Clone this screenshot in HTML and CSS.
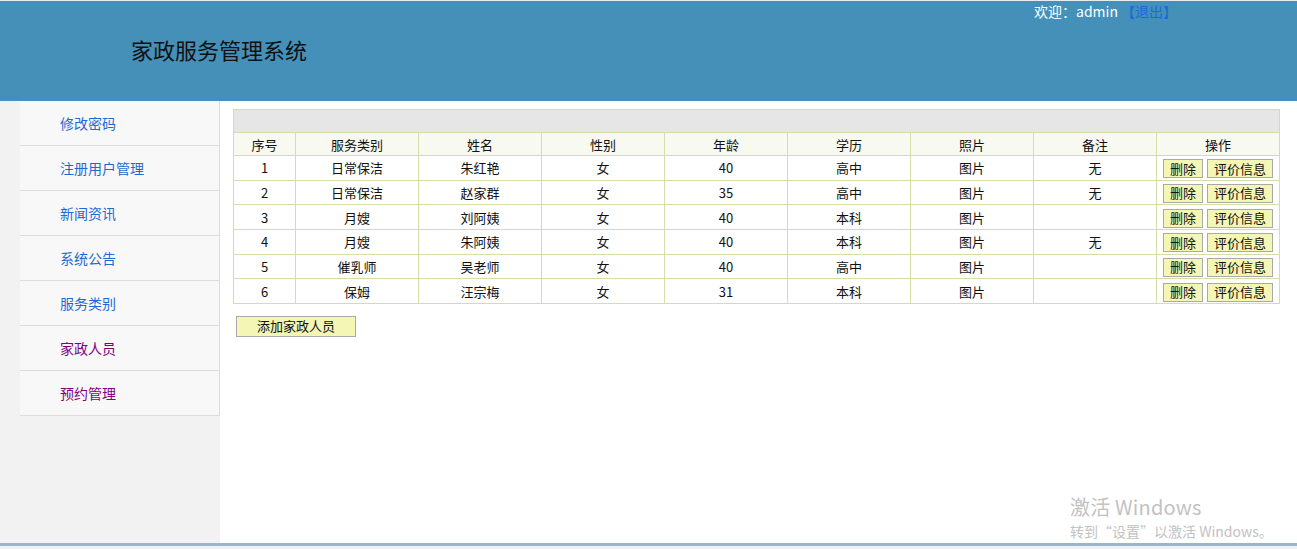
FILE: index.html
```html
<!DOCTYPE html>
<html>
<head>
    <title>家政服务管理系统</title>
    <meta charset="UTF-8">
    <link rel="stylesheet" href="styles.css">
</head>
<body>
    <div class="header">
        <div class="top-info">欢迎：admin <a href="#" class="logout">【退出】</a></div>
        <div class="title">家政服务管理系统</div>
    </div>

    <div class="wrap">
        <div class="sidebar">
            <ul class="menu">
                <li><a href="#">修改密码</a></li>
                <li><a href="#">注册用户管理</a></li>
                <li><a href="#">新闻资讯</a></li>
                <li><a href="#">系统公告</a></li>
                <li><a href="#">服务类别</a></li>
                <li><a href="#" class="visited">家政人员</a></li>
                <li><a href="#" class="visited">预约管理</a></li>
            </ul>
        </div>

        <div class="main">
            <table class="list">
                <colgroup>
                    <col class="c-no">
                    <col><col><col><col><col><col><col><col>
                </colgroup>
                <tr class="caption"><td colspan="9"></td></tr>
                <tr class="head">
                    <td>序号</td>
                    <td>服务类别</td>
                    <td>姓名</td>
                    <td>性别</td>
                    <td>年龄</td>
                    <td>学历</td>
                    <td>照片</td>
                    <td>备注</td>
                    <td>操作</td>
                </tr>
                <tr>
                    <td>1</td><td>日常保洁</td><td>朱红艳</td><td>女</td><td>40</td><td>高中</td><td>图片</td><td>无</td>
                    <td class="ops"><button class="btn">删除</button><button class="btn">评价信息</button></td>
                </tr>
                <tr>
                    <td>2</td><td>日常保洁</td><td>赵家群</td><td>女</td><td>35</td><td>高中</td><td>图片</td><td>无</td>
                    <td class="ops"><button class="btn">删除</button><button class="btn">评价信息</button></td>
                </tr>
                <tr>
                    <td>3</td><td>月嫂</td><td>刘阿姨</td><td>女</td><td>40</td><td>本科</td><td>图片</td><td></td>
                    <td class="ops"><button class="btn">删除</button><button class="btn">评价信息</button></td>
                </tr>
                <tr>
                    <td>4</td><td>月嫂</td><td>朱阿姨</td><td>女</td><td>40</td><td>本科</td><td>图片</td><td>无</td>
                    <td class="ops"><button class="btn">删除</button><button class="btn">评价信息</button></td>
                </tr>
                <tr>
                    <td>5</td><td>催乳师</td><td>吴老师</td><td>女</td><td>40</td><td>高中</td><td>图片</td><td></td>
                    <td class="ops"><button class="btn">删除</button><button class="btn">评价信息</button></td>
                </tr>
                <tr>
                    <td>6</td><td>保姆</td><td>汪宗梅</td><td>女</td><td>31</td><td>本科</td><td>图片</td><td></td>
                    <td class="ops"><button class="btn">删除</button><button class="btn">评价信息</button></td>
                </tr>
            </table>
            <button class="btn add">添加家政人员</button>

            <div class="activate">
                <div class="act-big">激活 Windows</div>
                <div class="act-small">转到“设置”以激活 Windows。</div>
            </div>
        </div>
    </div>

    <div class="bottom-bar"></div>
</body>
</html>
```

FILE: styles.css
```css
body {
    margin: 0;
    font-family: "Noto Sans CJK SC", "Liberation Sans", sans-serif;
    font-size: 13px;
    color: #111;
    background: #fff;
}
.header {
    height: 101px;
    box-sizing: border-box;
    border-top: 1px solid #e4edf2;
    background: #4490b8;
    color: #fff;
}
.top-info {
    height: 20px;
    line-height: 20px;
    padding-left: 1034px;
    font-size: 14px;
}
.logout { color: #1a6bd8; text-decoration: none; }
.title {
    padding-left: 131px;
    margin-top: 13px;
    font-size: 22px;
    line-height: 30px;
    color: #111;
}
.wrap {
    display: flex;
    height: 442px;
}
.sidebar {
    width: 220px;
    background: #f2f2f2;
    flex-shrink: 0;
}
.menu {
    list-style: none;
    margin: 0 0 0 20px;
    padding: 0;
    width: 199px;
    border-right: 1px solid #dcdcdc;
    background: #f8f8f8;
}
.menu li {
    height: 44px;
    line-height: 45px;
    border-bottom: 1px solid #dcdcdc;
}
.menu a {
    display: block;
    padding-left: 40px;
    font-size: 14px;
    color: #1e6ad3;
    text-decoration: none;
}
.menu a.visited { color: #800080; }
.main {
    flex: 1;
    position: relative;
    padding: 8px 18px 0 13px;
}
.list {
    width: 1046px;
    table-layout: fixed;
    border-collapse: collapse;
    border: 1px solid #d5dea8;
}
.list col { width: 123px; }
.list col.c-no { width: 62px; }
.list td {
    border: 1px solid #d5dea8;
    text-align: center;
    height: 23.67px;
    padding: 0;
}
.list .caption td { background: #e6e6e6; height: 22px; }
.list .head td { background: #f8f9f0; height: 22px; }
.ops { white-space: nowrap; }
.btn {
    font-family: inherit;
    font-size: 13px;
    color: #111;
    background: #f3f6b4;
    border: 1px solid #a9a9a9;
    height: 19px;
    line-height: 16px;
    padding: 0 6px;
    margin: 0 2px;
    vertical-align: middle;
}
.add {
    display: block;
    width: 120px;
    height: 21px;
    margin: 12px 0 0 3px;
}
.activate {
    position: absolute;
    left: 850px;
    top: 393px;
    color: #c2c2c2;
}
.act-big { font-size: 20px; line-height: 26px; letter-spacing: 0.2px; }
.act-small { font-size: 14px; line-height: 20px; margin-top: 1px; }
.bottom-bar {
    height: 3px;
    background: #9cb3c9;
    border-bottom: 3px solid #f0f0f0;
}
```
